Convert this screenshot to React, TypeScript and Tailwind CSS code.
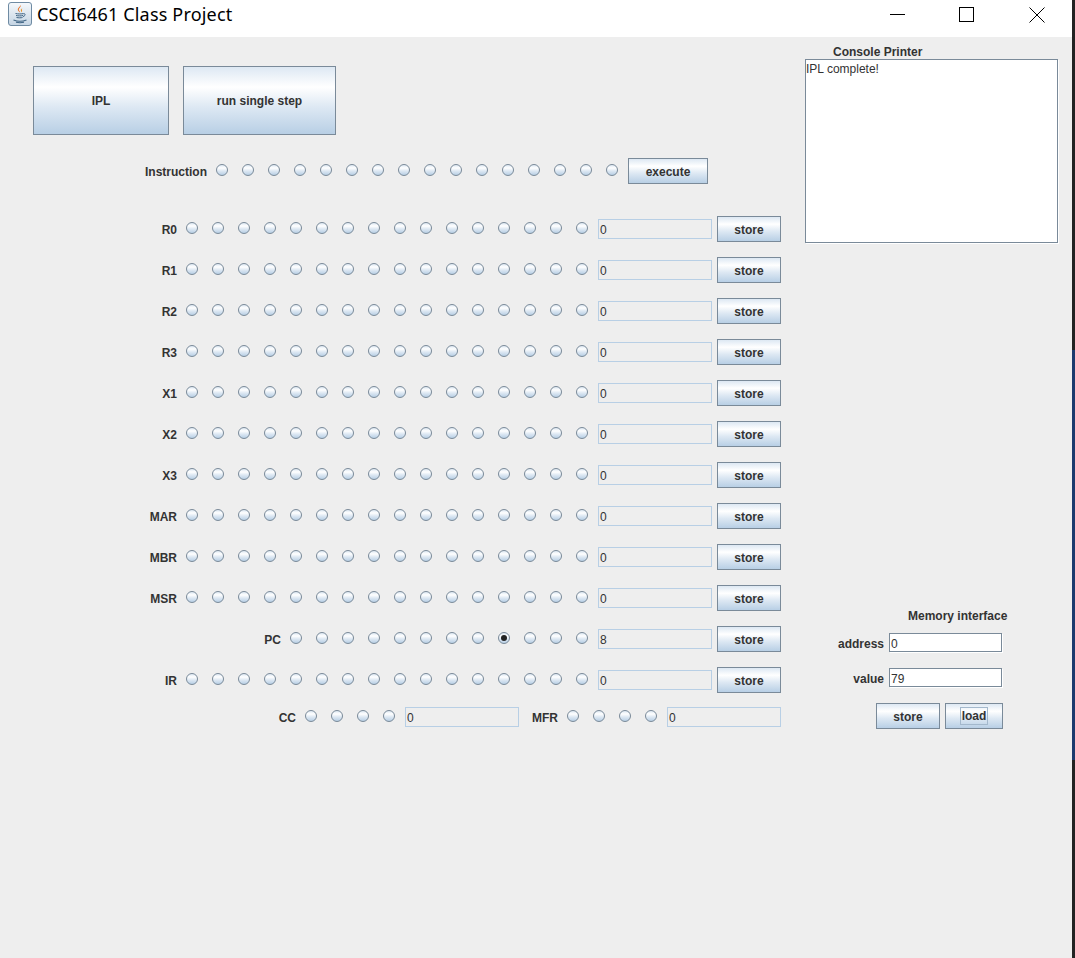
const GRAD = "bg-[linear-gradient(180deg,#dde8f3_0%,#ffffff_30%,#dde8f3_60%,#b8cfe5_100%)]";

function JavaIcon() {
  return (
    <svg width="24" height="24" viewBox="0 0 24 24" className="ml-2 mt-[2px]">
      <defs>
        <linearGradient id="tile" x1="0" y1="0" x2="0" y2="1">
          <stop offset="0" stopColor="#f6f9fc" />
          <stop offset="1" stopColor="#c4d4e3" />
        </linearGradient>
      </defs>
      <rect x="0.5" y="0.5" width="23" height="23" rx="2.5" fill="url(#tile)" stroke="#6f8ba3" />
      <path d="M12.5 3c1.2 2-2.6 3.200-1.400 5.500.4.8 1 1.300 1 2-.9-.7-2.700-1.800-2.300-3.500.4-1.600 2.600-2.300 2.700-4z" fill="#e8742a" />
      <path d="M14.500 6c-1.300.9-2.200 1.500-1.500 3 .2.500.3.900 0 1.300 1.200-.6 1.300-1.500.9-2.300-.3-.8 0-1.300.6-2z" fill="#e8932a" />
      <path d="M7.500 11.500c2 .6 6.500.6 8 0M8 13.500c2 .5 5.500.5 7 0M8.500 15.500c2 .4 4.500.4 6 0M15.500 11.800c2-.6 2.500 1.800-.5 2.800" fill="none" stroke="#3f6484" strokeWidth="1" />
      <path d="M5.500 18c3.500 1.300 9.500 1.300 13 0M8 20.300c2.500.6 5.500.6 8 0" fill="none" stroke="#3f6484" strokeWidth="1.100" />
    </svg>
  );
}

function TitleBar() {
  return (
    <div className="flex h-[37px] items-start justify-between bg-white">
      <div className="flex items-start">
        <JavaIcon />
        <span className="ml-[5px] mt-[5px] font-['Noto_Sans',sans-serif] text-[18px] leading-[18px] tracking-[0.18px] text-black">CSCI6461 Class Project</span>
      </div>
      <div className="flex">
        <div className="flex h-[29px] w-[70px] items-center justify-center">
          <div className="h-px w-[15px] bg-black" />
        </div>
        <div className="flex h-[29px] w-[70px] items-center justify-center">
          <div className="mr-[2px] h-[15px] w-[15px] border border-black" />
        </div>
        <div className="flex h-[29px] w-[70px] items-center justify-center">
          <svg width="16" height="16" viewBox="0 0 16 16" stroke="#000" strokeWidth="1">
            <path d="M.5.500l15 15M15.500.500l-15 15" />
          </svg>
        </div>
      </div>
    </div>
  );
}

function Radio({ checked }: { checked?: boolean }) {
  return (
    <span className={`mb-[2px] flex h-[12px] w-[12px] shrink-0 items-center justify-center rounded-full border border-[#7a8a99] ${GRAD}`}>
      {checked && <span className="h-[6px] w-[6px] rounded-full bg-[#222222]" />}
    </span>
  );
}

function Radios({ count, on }: { count: number; on?: number }) {
  return (
    <div className="ml-[9px] mr-[1px] flex items-center gap-[14px]">
      {Array.from({ length: count }, (_, i) => (
        <Radio key={i} checked={i === on} />
      ))}
    </div>
  );
}

function Btn({ children, className }: { children: React.ReactNode; className: string }) {
  return (
    <button type="button" className={`flex shrink-0 items-center justify-center border border-[#7a8a99] font-bold text-[#333333] ${GRAD} ${className}`}>
      {children}
    </button>
  );
}

function Label({ children, className }: { children: React.ReactNode; className: string }) {
  return <span className={`mt-[2px] text-right font-bold ${className}`}>{children}</span>;
}

function Field({ value }: { value: string }) {
  return (
    <input
      readOnly
      value={value}
      className="ml-[9px] h-[20px] w-[114px] border border-[#b8cfe5] bg-[#eeeeee] pl-[1px] pt-[2px] text-[12px] text-[#333333] outline-none"
    />
  );
}

function WhiteField({ value }: { value: string }) {
  return (
    <input
      readOnly
      value={value}
      className="ml-[5px] h-[19px] w-[113px] border border-[#7a8a99] bg-white pl-[1px] pt-[2px] text-[12px] text-[#333333] shadow-[1px_1px_0_#ffffff] outline-none"
    />
  );
}

function RegisterRow({ label, bits = 16, labelWidth = "w-[144px]", value = "0", on }: { label: string; bits?: number; labelWidth?: string; value?: string; on?: number }) {
  return (
    <div className="flex h-[26px] items-center">
      <Label className={labelWidth}>{label}</Label>
      <Radios count={bits} on={on} />
      <Field value={value} />
      <Btn className="ml-[5px] h-[26px] w-[64px] pt-[2px]">store</Btn>
    </div>
  );
}

export default function App() {
  const regs = ["R0", "R1", "R2", "R3", "X1", "X2", "X3", "MAR", "MBR", "MSR"];
  return (
    <div className="flex h-[958px] overflow-hidden bg-[#eeeeee] font-['Liberation_Sans',Arial,sans-serif] text-[12px] text-[#333333]">
      <div className="flex min-w-0 flex-1 flex-col">
        <TitleBar />
        <div className="flex flex-1">
          <div className="ml-[33px] w-[748px] pt-[29px]">
            <div className="flex gap-[14px]">
              <Btn className="h-[69px] w-[136px]">IPL</Btn>
              <Btn className="h-[69px] w-[153px]">run single step</Btn>
            </div>
            <div className="mt-[23px] flex h-[26px] items-center">
              <Label className="w-[174px]">Instruction</Label>
              <Radios count={16} />
              <Btn className="ml-[9px] h-[26px] w-[80px] pt-[2px]">execute</Btn>
            </div>
            <div className="mt-[32px] flex flex-col gap-[15px]">
              {regs.map((r) => (
                <RegisterRow key={r} label={r} />
              ))}
              <RegisterRow label="PC" bits={12} labelWidth="w-[248px]" value="8" on={8} />
              <RegisterRow label="IR" />
            </div>
            <div className="mt-[14px] flex h-[20px] items-center">
              <Label className="w-[263px]">CC</Label>
              <Radios count={4} />
              <Field value="0" />
              <Label className="ml-[6px] w-[33px]">MFR</Label>
              <Radios count={4} />
              <Field value="0" />
            </div>
          </div>
          <div className="ml-[24px] w-[253px] pt-[8px]">
            <div className="ml-[28px] h-[14px] font-bold leading-[14px]">Console Printer</div>
            <div className="h-[184px] border border-[#7a8a99] bg-white pt-[2px] leading-[15px] shadow-[1px_1px_0_#ffffff]">IPL complete!</div>
            <div className="ml-[103px] mt-[366px] h-[14px] font-bold leading-[14px]">Memory interface</div>
            <div className="mt-[10px] flex h-[19px] items-center">
              <Label className="w-[79px]">address</Label>
              <WhiteField value="0" />
            </div>
            <div className="mt-[16px] flex h-[19px] items-center">
              <Label className="w-[79px]">value</Label>
              <WhiteField value="79" />
            </div>
            <div className="ml-[71px] mt-[16px] flex gap-[5px]">
              <Btn className="h-[26px] w-[64px] pt-[2px]">store</Btn>
              <Btn className="h-[26px] w-[58px]">
                <span className="border border-[#a3b8cc] px-px leading-[16px]">load</span>
              </Btn>
            </div>
          </div>
        </div>
      </div>
      <div className="flex w-[3px] shrink-0 flex-col bg-[#232323]">
        <div className="mt-[350px] h-[410px] bg-[#1c3a6e]" />
      </div>
    </div>
  );
}
